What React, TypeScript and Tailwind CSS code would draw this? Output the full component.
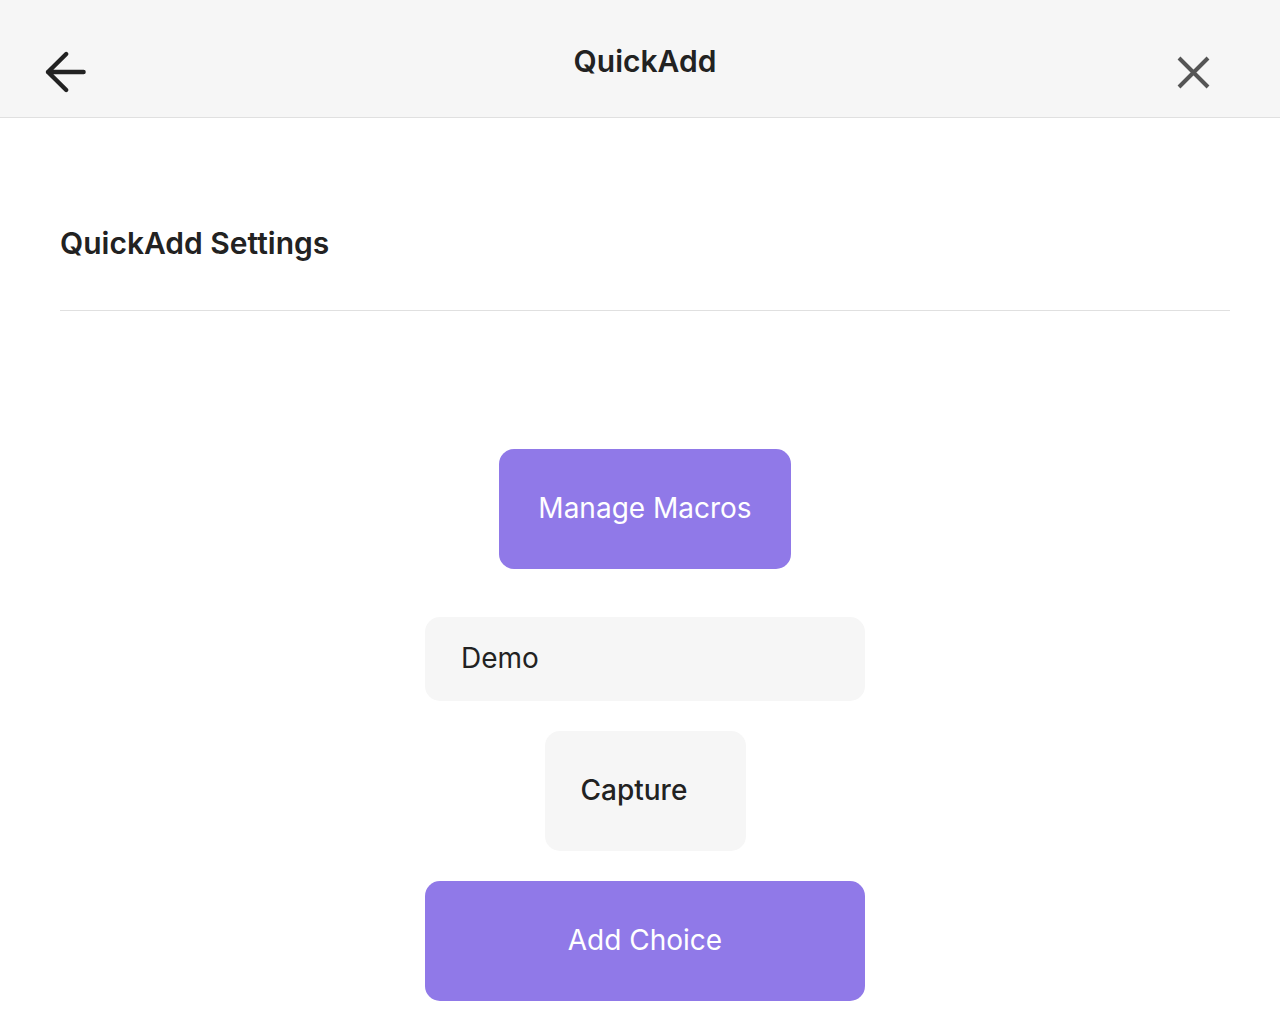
import React from "react";

export default function App() {
  return (
    <div className="min-h-screen bg-white font-['Inter',sans-serif] text-[#222222]">
      <header className="grid min-h-[118px] grid-cols-[1fr_auto_1fr] items-start border-b border-[#e0e0e0] bg-[#f6f6f6] pr-[30px] pl-10">
        <button type="button" aria-label="Back" className="mt-11 size-14">
          <svg viewBox="0 0 56 56" className="size-14" fill="none" stroke="#222222" strokeWidth="4.4" strokeLinecap="round" strokeLinejoin="round">
            <path d="M26.2 10L8 28L26.2 46M8 28H43.6" />
          </svg>
        </button>
        <h1 className="mt-10 text-[30px] leading-[42px] font-semibold">QuickAdd</h1>
        <button type="button" aria-label="Close" className="mt-11 mr-[30px] size-14 justify-self-end">
          <svg viewBox="0 0 56 56" className="size-14" fill="none" stroke="#555555" strokeWidth="4">
            <path d="M15 14L44 43M44 14L15 43" />
          </svg>
        </button>
      </header>
      <main className="pt-[104px] pr-[50px] pb-[22px] pl-15">
        <h2 className="border-b border-[#e0e0e0] pb-[46px] text-[30px] leading-[42px] font-semibold">QuickAdd Settings</h2>
        <form className="flex flex-col items-center pt-[138px] text-[28px]" onSubmit={(e) => e.preventDefault()}>
          <button type="button" className="h-[120px] min-w-[292px] rounded-[15px] bg-[#9079e8] px-9 pb-0.5 text-white">Manage Macros</button>
          <input aria-label="Choice name" defaultValue="Demo" className="mt-12 h-[84px] w-[440px] rounded-[15px] bg-[#f6f6f6] px-9 pb-0.5 outline-none" />
          <select aria-label="Choice type" defaultValue="Capture" className="mt-[30px] h-[120px] w-[201px] appearance-none rounded-[15px] bg-[#f6f6f6] px-9 pb-0.5 font-medium outline-none">
            <option>Capture</option>
            <option>Template</option>
            <option>Macro</option>
            <option>Multi</option>
          </select>
          <button type="submit" className="mt-[30px] h-[120px] w-[440px] rounded-[15px] bg-[#9079e8] pb-0.5 text-white">Add Choice</button>
        </form>
      </main>
    </div>
  );
}
